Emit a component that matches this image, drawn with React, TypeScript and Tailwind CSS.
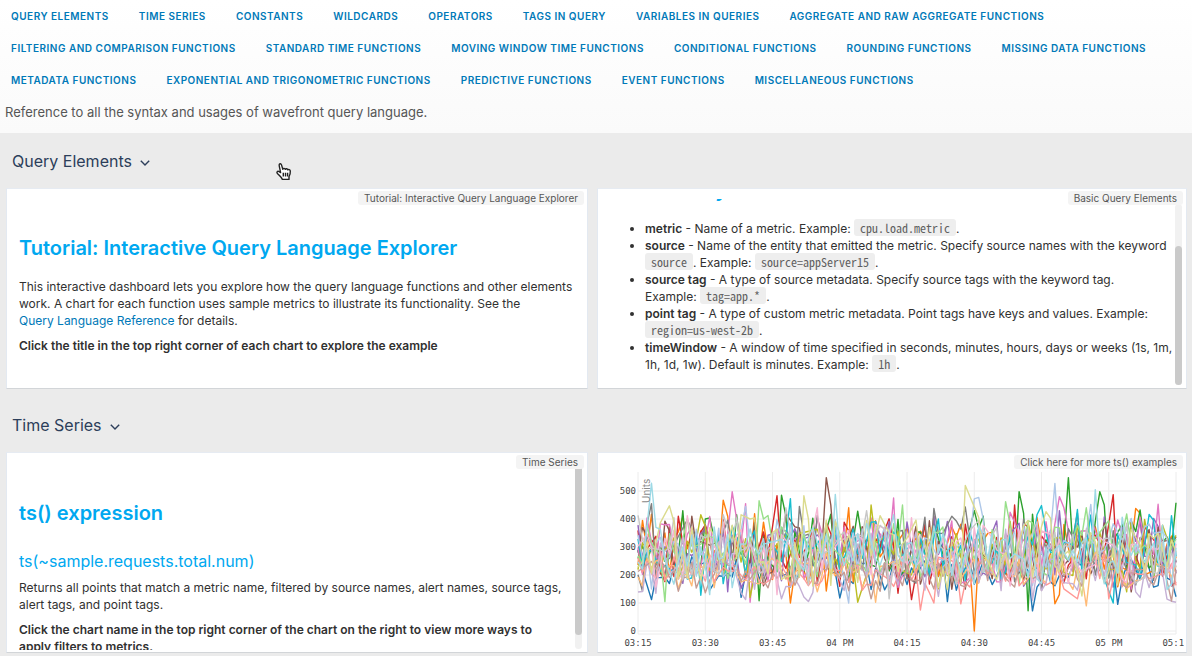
import type { ReactNode } from "react";

const NAV_ITEMS = [
  "Query Elements",
  "Time Series",
  "Constants",
  "Wildcards",
  "Operators",
  "Tags in Query",
  "Variables in Queries",
  "Aggregate and Raw Aggregate Functions",
  "Filtering and Comparison Functions",
  "Standard Time Functions",
  "Moving Window Time Functions",
  "Conditional Functions",
  "Rounding Functions",
  "Missing Data Functions",
  "Metadata Functions",
  "Exponential and Trigonometric Functions",
  "Predictive Functions",
  "Event Functions",
  "Miscellaneous Functions",
];

function Section({ title, children }: { title: string; children: ReactNode }) {
  return (
    <section className="pb-2">
      <h2 className="flex h-[55px] items-center pl-[6px] text-[#2c3e5a]">
        <button type="button" className="flex items-center gap-2 text-base">
          {title}
          <svg width="10" height="6" viewBox="0 0 10 6" className="mt-1" fill="none" stroke="currentColor" strokeWidth="1.4">
            <path d="M0.8 0.8 5 5 9.2 0.8" />
          </svg>
        </button>
      </h2>
      <div className="grid grid-cols-[582fr_590fr] gap-[9px]">{children}</div>
    </section>
  );
}

function Card({ label, scroll, children }: { label: string; scroll?: "top" | "bottom"; children: ReactNode }) {
  return (
    <article className="relative h-[201px] min-w-0 overflow-hidden border border-t-[#e6ebf2] border-r-[#e3e9f1] border-b-[#d2d5d8] border-l-[#e3e9f1] bg-white">
      {children}
      {scroll && (
        <div
          className={
            scroll === "top"
              ? "absolute top-[15px] right-[5px] bottom-[3px] flex w-[7px] flex-col rounded-full bg-[#f1f1f1]"
              : "absolute top-[15px] right-[4px] bottom-[3px] flex w-[7px] flex-col justify-end rounded-full bg-[#f1f1f1]"
          }
        >
          <div className={scroll === "top" ? "h-[167px] rounded-b-full bg-[#cacaca]" : "h-[139px] rounded-full bg-[#cacaca]"} />
        </div>
      )}
      <a href="#" className="absolute top-[2px] right-[3px] rounded-[3px] bg-[#f4f4f4] px-[6px] text-[10px] leading-[14px] text-[#565656]">
        {label}
      </a>
    </article>
  );
}

function Code({ children }: { children: ReactNode }) {
  return (
    <code className="rounded-[3px] bg-[#eeeeee] px-[6px] font-['Noto_Sans_Mono_CJK_SC','DejaVu_Sans_Mono',monospace] text-xs leading-none text-[#5f5f5f]">
      {children}
    </code>
  );
}

type Series = { color: string; mean: number; peaks: Record<number, number> };

const SERIES: Series[] = [
  { color: "#1f77b4", mean: 215, peaks: { 3: 112, 23: 120, 45: 118, 69: 105, 88: 72, 107: 95, 120: 122 } },
  { color: "#ff7f0e", mean: 285, peaks: { 1: 395, 19: 467, 20: 410, 34: 100, 47: 440, 75: 0, 93: 97, 94: 130, 111: 438, 112: 420 } },
  { color: "#2ca02c", mean: 290, peaks: { 10: 430, 15: 400, 27: 108, 32: 485, 33: 410, 49: 428, 75: 430, 85: 498, 86: 420, 87: 72, 96: 548, 103: 498, 104: 450, 112: 432, 120: 458 } },
  { color: "#d62728", mean: 285, peaks: { 31: 483, 58: 135, 61: 112, 84: 450, 106: 487 } },
  { color: "#9467bd", mean: 280, peaks: { 0: 378, 20: 140, 94: 430 } },
  { color: "#8c564b", mean: 285, peaks: { 12: 410, 26: 388, 42: 548, 43: 450, 90: 145, 110: 140 } },
  { color: "#e377c2", mean: 285, peaks: { 21: 497, 22: 400, 24: 455, 25: 103, 57: 475, 94: 480, 95: 440, 116: 453 } },
  { color: "#7f7f7f", mean: 285, peaks: { 1: 142, 3: 455, 36: 445, 66: 438, 70: 410, 73: 443 } },
  { color: "#bcbd22", mean: 285, peaks: { 14: 415, 25: 120, 49: 103, 52: 450, 109: 140 } },
  { color: "#17becf", mean: 290, peaks: { 14: 128, 34: 473, 67: 400, 90: 448, 89: 415, 106: 100, 119: 412 } },
  { color: "#aec7e8", mean: 285, peaks: { 3: 150, 24: 445, 47: 100, 75: 472, 76: 477, 77: 400, 93: 527, 101: 452 } },
  { color: "#ffbb78", mean: 215, peaks: { 40: 140, 53: 103, 100: 90 } },
  { color: "#98df8a", mean: 290, peaks: { 6: 105, 27: 465, 28: 400, 59: 450, 82: 462, 100: 440, 109: 418 } },
  { color: "#ff9896", mean: 215, peaks: { 63: 75, 64: 170, 66: 100, 72: 97, 98: 115, 105: 115 } },
  { color: "#c5b0d5", mean: 240, peaks: { 24: 112, 32: 115, 38: 105, 46: 145, 88: 110, 112: 120 } },
  { color: "#c49c94", mean: 210, peaks: { 9: 142, 52: 115, 119: 107 } },
  { color: "#f7b6d2", mean: 280, peaks: { 11: 412, 31: 130, 40: 440, 61: 405 } },
  { color: "#c7c7c7", mean: 285, peaks: { 8: 405, 19: 415, 51: 430, 56: 115, 33: 440 } },
  { color: "#dbdb8d", mean: 285, peaks: { 7: 447, 8: 390, 23: 415, 24: 408, 25: 400, 37: 483, 38: 400, 73: 520, 99: 125, 54: 412 } },
  { color: "#9edae5", mean: 285, peaks: { 3: 528, 4: 370, 16: 130, 44: 488, 21: 155, 102: 505, 57: 415 } },
];

const POINTS = 121;
const CHART_LEFT = 40;
const CHART_RIGHT = 578;
const CHART_ZERO = 178;
const UNIT = 0.28;

function noise(seed: number) {
  let state = seed * 7919 + 13;
  return () => {
    state = (state * 1103515245 + 12345) % 2147483648;
    return state / 2147483648;
  };
}

function seriesPath(series: Series, index: number) {
  const next = noise(index + 1);
  const step = (CHART_RIGHT - CHART_LEFT) / (POINTS - 1);
  const parts: string[] = [];
  for (let i = 0; i < POINTS; i++) {
    const spread = series.mean < 230 ? 160 : 290;
    const random = series.mean + (next() * 0.7 + next() * 0.3 - 0.5) * spread;
    const skipped = next() < 0.12;
    const peak = series.peaks[i];
    if (peak === undefined && skipped && i > 0 && i < POINTS - 1) continue;
    const value = peak ?? random;
    parts.push(`${(CHART_LEFT + i * step).toFixed(1)},${(CHART_ZERO - value * UNIT).toFixed(1)}`);
  }
  return "M" + parts.join("L");
}

const TIMES = ["03:15", "03:30", "03:45", "04 PM", "04:15", "04:30", "04:45", "05 PM", "05:15"];

function RequestsChart() {
  const gap = (CHART_RIGHT - CHART_LEFT) / 8;
  return (
    <div className="h-full pr-[2px]">
      <svg viewBox="0 0 586 199" className="block h-full w-full" role="img" aria-label="Requests over time">
        <g stroke="#ececec" strokeWidth="1">
          {[0, 100, 200, 300, 400, 500].map((v) => (
            <line key={v} x1={CHART_LEFT} x2={CHART_RIGHT} y1={CHART_ZERO - v * UNIT} y2={CHART_ZERO - v * UNIT} />
          ))}
          {TIMES.map((t, i) => (
            <line key={t} x1={CHART_LEFT + i * gap} x2={CHART_LEFT + i * gap} y1="19" y2="181" />
          ))}
          <line x1={CHART_LEFT} x2={CHART_RIGHT} y1="181" y2="181" />
        </g>
        <g fill="none" strokeWidth="1.4" strokeLinejoin="round">
          {SERIES.map((s, i) => (
            <path key={s.color} d={seriesPath(s, i)} stroke={s.color} />
          ))}
        </g>
        <g className="font-['DejaVu_Sans_Mono',monospace] text-[9px]" fill="#444">
          {[0, 100, 200, 300, 400, 500].map((v) => (
            <text key={v} x="38" y={CHART_ZERO - v * UNIT + 3} textAnchor="end">
              {v}
            </text>
          ))}
          {TIMES.map((t, i) => (
            <text key={t} x={CHART_LEFT + i * gap} y="193" textAnchor="middle">
              {t}
            </text>
          ))}
        </g>
        <text transform="translate(52 50) rotate(-90)" fill="#8a8a8a" className="font-['Inter',sans-serif] text-[10px]">
          Units
        </text>
      </svg>
    </div>
  );
}

export default function App() {
  return (
    <div className="min-h-screen bg-[#ebebeb] font-['Inter',sans-serif] text-xs leading-[17px] text-[#313131]">
      <header className="bg-linear-to-b from-white to-[#fafafa] pb-1">
        <nav aria-label="Sections">
          <ul className="flex flex-wrap gap-x-[30px] pl-[11px]">
            {NAV_ITEMS.map((item) => (
              <li key={item}>
                <a href="#" className="block text-[10px] leading-8 font-semibold tracking-wider whitespace-nowrap text-[#0079b8] uppercase">
                  {item}
                </a>
              </li>
            ))}
          </ul>
        </nav>
        <p className="pl-[5px] text-[13px] leading-[33px] text-[#565656]">
          Reference to all the syntax and usages of wavefront query language.
        </p>
      </header>

      <main className="relative pr-[5px] pl-[6px]">
        <Section title="Query Elements">
          <Card label="Tutorial: Interactive Query Language Explorer">
            <div className="px-3 pt-[47px]">
              <h3 className="text-xl leading-6 font-semibold text-[#00a8f0]">Tutorial: Interactive Query Language Explorer</h3>
              <p className="mt-[18px]">
                This interactive dashboard lets you explore how the query language functions and other elements work. A chart for each
                function uses sample metrics to illustrate its functionality. See the{" "}
                <a href="#" className="whitespace-nowrap text-[#0079b8]">
                  Query Language Reference
                </a>{" "}
                for details.
              </p>
              <p className="mt-2 font-semibold">Click the title in the top right corner of each chart to explore the example</p>
            </div>
          </Card>
          <Card label="Basic Query Elements" scroll="bottom">
            <div className="flex h-full flex-col pt-[10px]">
              <div className="flex min-h-0 flex-1 flex-col justify-end overflow-hidden pr-3 pb-[15px] pl-3">
                <h3 className="text-xl leading-6 font-semibold text-[#00a8f0]">Basic Query Elements</h3>
                <ul className="mt-[18px] list-disc pl-[35px]">
                  <li>
                    <b className="font-semibold">metric</b> - Name of a metric. Example: <Code>cpu.load.metric</Code>.
                  </li>
                  <li>
                    <b className="font-semibold">source</b> - Name of the entity that emitted the metric. Specify source names with the
                    keyword <Code>source</Code>. Example: <Code>source=appServer15</Code>.
                  </li>
                  <li>
                    <b className="font-semibold">source tag</b> - A type of source metadata. Specify source tags with the keyword tag.
                    <br />
                    Example: <Code>tag=app.*</Code>.
                  </li>
                  <li>
                    <b className="font-semibold">point tag</b> - A type of custom metric metadata. Point tags have keys and values.
                    Example: <Code>region=us-west-2b</Code>.
                  </li>
                  <li>
                    <b className="font-semibold">timeWindow</b> - A window of time specified in seconds, minutes, hours, days or weeks
                    (1s, 1m, 1h, 1d, 1w). Default is minutes. Example: <Code>1h</Code>.
                  </li>
                </ul>
              </div>
            </div>
          </Card>
        </Section>

        <Section title="Time Series">
          <Card label="Time Series" scroll="top">
            <div className="h-full pb-[2px]">
              <div className="h-full overflow-hidden pt-12 pr-6 pl-3">
                <h3 className="text-xl leading-6 font-semibold text-[#00a8f0]">ts() expression</h3>
                <h4 className="mt-6 text-base leading-6 text-[#00a8f0]">ts(~sample.requests.total.num)</h4>
                <p className="mt-[6px]">
                  Returns all points that match a metric name, filtered by source names, alert names, source tags, alert tags, and point
                  tags.
                </p>
                <p className="mt-2 font-semibold">
                  Click the chart name in the top right corner of the chart on the right to view more ways to apply filters to metrics.
                </p>
              </div>
            </div>
          </Card>
          <Card label="Click here for more ts() examples">
            <RequestsChart />
          </Card>
        </Section>

        <svg
          className="pointer-events-none absolute top-[29px] left-[275px]"
          width="17"
          height="19"
          viewBox="0 0 17 19"
          fill="#fff"
          stroke="#222"
          strokeWidth="1.4"
          strokeLinejoin="round"
          aria-hidden="true"
        >
          <path d="M5.6 10.6 4.2 3.6C3.8 1.4 5.9 1 6.5 2.9L7.8 7.2C8.2 6 10 6.1 10.3 7.3 10.8 6.4 12.4 6.6 12.7 7.9 13.5 7 15.2 7.5 15.3 9 15.5 11.5 14.8 13.2 14 14.6V17.4H7.3C6.8 15.6 4.6 13.6 2.6 11.7 1 10 2.6 8.6 4.2 9.7Z" />
          <path d="M8.3 10.8V14.6M10.5 10.8V14.6M12.6 10.8V14.6" fill="none" />
        </svg>
      </main>
    </div>
  );
}
